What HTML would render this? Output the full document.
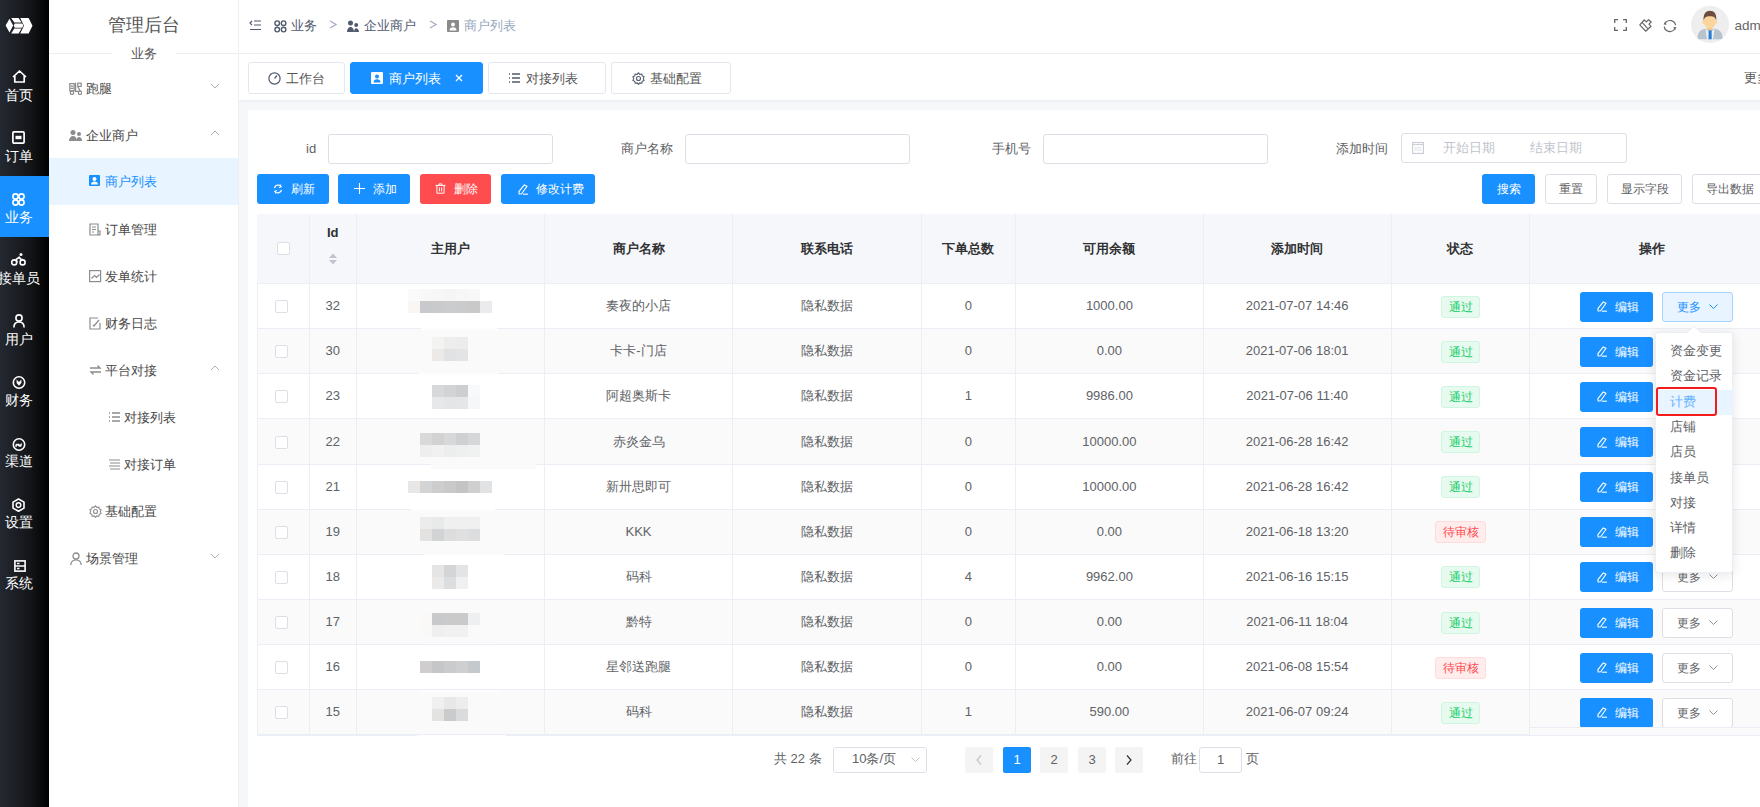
<!DOCTYPE html><html><head><meta charset="utf-8"><style>
*{box-sizing:border-box;margin:0;padding:0}
html,body{width:1760px;height:807px;overflow:hidden;background:#fff;font-family:"Liberation Sans",sans-serif;color:#606266}
.a{position:absolute}
.nav1{left:0;top:0;width:49px;height:807px;background:linear-gradient(to right,#242831 0%,#1c1f25 30%,#131518 62%,#000 100%)}
.n1{position:absolute;left:0;width:49px;height:61px;color:#fff;text-align:center}
.n1 svg{position:absolute;left:12px;top:16px}
.n1 span{position:absolute;left:-6px;width:49px;top:32.5px;font-size:14px;line-height:18px;white-space:nowrap;text-align:center}
.n1.on{background:#1890ff}
.nav2{left:49px;top:0;width:190px;height:807px;background:#fff}
.m2{position:absolute;left:49px;width:189px;height:47px;font-size:13px;color:#484848;white-space:nowrap}
.m2 .ic{position:absolute;top:17px}
.m2 .tx{position:absolute;top:14px;line-height:19px}
.m2.on{background:#e8f4ff;color:#1890ff}
.chev{position:absolute;left:160px;top:20px}
.hdr{left:239px;top:0;width:1521px;height:54px;border-bottom:1px solid #f0f0f0;background:#fff}
.bc{position:absolute;top:17px;font-size:13px;line-height:17px;white-space:nowrap;color:#515a6e}
.tabs{left:239px;top:54px;width:1521px;height:46px;background:#fff}
.tab{position:absolute;top:62px;height:32px;border:1px solid #e4e7ed;border-radius:3px;background:#fff;font-size:13px;color:#515a6e;white-space:nowrap}
.tab.on{background:#1890ff;border-color:#1890ff;color:#fff}
.main{left:239px;top:100px;width:1521px;height:707px;background:linear-gradient(#eceef2,#f5f7f9 3px,#f5f7f9)}
.card{left:248px;top:110px;width:1512px;height:697px;background:#fff}
.lbl{position:absolute;top:140px;font-size:13px;line-height:17px;color:#606266;white-space:nowrap}
.inp{position:absolute;top:134px;height:30px;border:1px solid #dcdfe6;border-radius:3px;background:#fff}
.btn{position:absolute;top:174px;height:30px;border-radius:3px;font-size:12px;line-height:30px;color:#fff;white-space:nowrap;background:#1890ff}
.btn.w{background:#fff;border:1px solid #dcdfe6;color:#606266;line-height:28px}
.tbl{left:257px;top:214px;width:1520px;height:522px;border:1px solid #ebeef5;border-right:none}
.th{position:absolute;top:214px;height:70px;background:#f5f7fa;border-bottom:1px solid #ebeef5;border-right:1px solid #ebeef5;font-size:13px;font-weight:bold;color:#303133;text-align:center;line-height:70px;white-space:nowrap}
.row{position:absolute;left:258px;width:1502px;height:45px;border-bottom:1px solid #ebeef5}
.td{position:absolute;top:0;height:100%;border-right:1px solid #ebeef5;text-align:center;font-size:13px;color:#606266;line-height:44px;white-space:nowrap}
.cb{position:absolute;width:13px;height:13px;border:1px solid #dcdfe6;border-radius:2px;background:#fff}
.tag{position:absolute;height:22px;border:1px solid #d0f5e0;background:#e7faf0;color:#13ce66;border-radius:3px;font-size:12px;line-height:20px;text-align:center}
.tag.r{border-color:#ffdbdb;background:#ffeded;color:#ff4949}
.eb{position:absolute;width:73px;height:30px;border-radius:3px;background:#1890ff;color:#fff;font-size:12px;line-height:30px;white-space:nowrap}
.mb{position:absolute;width:71px;height:30px;border-radius:3px;background:#fff;border:1px solid #dcdfe6;color:#606266;font-size:12px;line-height:28px;white-space:nowrap}
.pg{position:absolute;top:747px;height:26px;width:28px;background:#f4f4f5;border-radius:2px;font-size:13px;line-height:26px;text-align:center;color:#606266}
.dd{left:1655px;top:332px;width:78px;height:241px;background:#fff;border:1px solid #ebeef5;border-radius:3px;box-shadow:0 2px 12px rgba(0,0,0,.1)}
.di{position:absolute;left:1656px;width:77px;height:25px;font-size:12.5px;line-height:25px;color:#606266;padding-left:14px;white-space:nowrap}
</style></head><body>
<div class="a nav1"></div>
<svg class="a" style="left:0;top:10px" width="40" height="30" viewBox="0 0 40 30"><g fill="#fff"><path d="M5.6 15.6L9.5 8.8 13.2 15.6 9.5 22.4Z"/><path d="M11.2 8L18.6 8 21.6 12.6 14.3 12.6Z"/><path d="M14.6 13.5L22.2 13.5 23.4 15.6 22.2 17.7 14.6 17.7 13.8 15.6Z"/><path d="M14.3 18.6L21.6 18.6 18.6 23.6 11.2 23.6Z"/><path d="M20.2 8L28.6 8 32.5 15.8 28.6 23.6 20.2 23.6 24 15.8Z"/></g></svg>
<div class="n1" style="top:53.5px"><span>首页</span></div>
<svg class="a" style="left:11.5px;top:69.7px" width="15" height="13" viewBox="0 0 15 13"><path d="M1 7L7.5 1 14 7M2.8 5.6V12h9.4V5.6" fill="none" stroke="#fff" stroke-width="1.7" stroke-linejoin="round"/></svg>
<div class="n1" style="top:114.55px"><span>订单</span></div>
<svg class="a" style="left:12.3px;top:130.7px" width="13" height="13" viewBox="0 0 13 13"><rect x="0.9" y="0.9" width="11.2" height="11.2" rx="1" fill="none" stroke="#fff" stroke-width="1.7"/><rect x="3.5" y="4.8" width="6" height="3.4" fill="#fff"/></svg>
<div class="n1 on" style="top:175.6px"><span>业务</span></div>
<svg class="a" style="left:12.3px;top:192.7px" width="13" height="13" viewBox="0 0 13 13"><g fill="none" stroke="#fff" stroke-width="1.6"><circle cx="3.5" cy="3.5" r="2.6"/><circle cx="9.5" cy="3.5" r="2.6"/><circle cx="3.5" cy="9.5" r="2.6"/><circle cx="9.5" cy="9.5" r="2.6"/></g></svg>
<div class="n1" style="top:236.64999999999998px"><span>接单员</span></div>
<svg class="a" style="left:11.2px;top:252.7px" width="15" height="13" viewBox="0 0 15 13"><g fill="none" stroke="#fff" stroke-width="1.6"><circle cx="3.2" cy="9.4" r="2.5"/><circle cx="11.6" cy="9.4" r="2.5"/></g><circle cx="10" cy="1.6" r="1.5" fill="#fff"/><path d="M6 9.5L5.2 6.5 8.2 4.2 10 6.6H12" fill="none" stroke="#fff" stroke-width="1.6" stroke-linejoin="round"/></svg>
<div class="n1" style="top:297.7px"><span>用户</span></div>
<svg class="a" style="left:12.6px;top:313.7px" width="12" height="14" viewBox="0 0 12 14"><g fill="none" stroke="#fff" stroke-width="1.6"><circle cx="6" cy="4" r="3.1"/><path d="M0.9 13.5C0.9 9.8 3.2 8 6 8s5.1 1.8 5.1 5.5"/></g></svg>
<div class="n1" style="top:358.75px"><span>财务</span></div>
<svg class="a" style="left:11.8px;top:376.2px" width="14" height="13" viewBox="0 0 14 13"><circle cx="7" cy="6.5" r="5.7" fill="none" stroke="#fff" stroke-width="1.6"/><path d="M4.6 3.6L7 6 9.4 3.6 9.4 7 7 9.8 4.6 7Z" fill="#fff"/></svg>
<div class="n1" style="top:419.79999999999995px"><span>渠道</span></div>
<svg class="a" style="left:11.8px;top:437.7px" width="14" height="13" viewBox="0 0 14 13"><circle cx="7" cy="6.5" r="5.7" fill="none" stroke="#fff" stroke-width="1.6"/><path d="M4.5 8.8c-1.2-1.2 0-3 1.2-2.2l1.6 1.2c1.2.8 2.6-1 1.4-2.2M6 6.2l2 1.6" fill="none" stroke="#fff" stroke-width="1.5"/></svg>
<div class="n1" style="top:480.84999999999997px"><span>设置</span></div>
<svg class="a" style="left:11.8px;top:497.7px" width="13" height="14" viewBox="0 0 13 14"><path d="M6.5 1L12 4.1V10.1L6.5 13.2 1 10.1V4.1Z" fill="none" stroke="#fff" stroke-width="1.6" stroke-linejoin="round"/><circle cx="6.5" cy="7.1" r="2.3" fill="none" stroke="#fff" stroke-width="1.5"/></svg>
<div class="n1" style="top:541.9px"><span>系统</span></div>
<svg class="a" style="left:13.5px;top:560.2px" width="12" height="12" viewBox="0 0 12 12"><rect x="0.9" y="0.9" width="10.2" height="10.2" fill="none" stroke="#fff" stroke-width="1.6"/><path d="M0.9 6h10.2M3 3.4h2.5M3 8.6h2.5" stroke="#fff" stroke-width="1.5"/></svg>
<div class="a nav2"></div>
<div class="a" style="left:49px;top:14px;width:190px;text-align:center;font-size:18px;line-height:22px;color:#555">管理后台</div>
<div class="a" style="left:49px;top:53px;width:63px;height:1px;background:#eee"></div>
<div class="a" style="left:176px;top:53px;width:63px;height:1px;background:#eee"></div>
<div class="a" style="left:112px;top:45px;width:64px;text-align:center;font-size:13px;line-height:17px;color:#555">业务</div>
<div class="m2" style="top:64.5px"><svg class="ic" style="left:20px;top:17px" width="13" height="13" viewBox="0 0 13 13"><g fill="none" stroke="#8c8c8c" stroke-width="1.2"><rect x="0.8" y="1.6" width="4.4" height="7.2"/><path d="M1.5 4.2h3M1.5 6.4h3"/><path d="M6.6 0.8V9.4H10.5M8.6 4.4L11.4 9.2"/><rect x="8.8" y="1.2" width="3.4" height="3.2"/><circle cx="3" cy="10.8" r="1.7"/><circle cx="11" cy="10.8" r="1.7"/></g></svg><span class="tx" style="left:37px">跑腿</span><svg class="chev" style="left:160.5px;top:18.5px" width="10" height="6" viewBox="0 0 10 6"><path d="M1 1l4 4 4-4" fill="none" stroke="#b0b0b0" stroke-width="1"/></svg></div>
<div class="m2" style="top:111.5px"><svg class="ic" style="left:20px;top:17px" width="13" height="13" viewBox="0 0 13 13"><circle cx="4" cy="3.5" r="2.5" fill="#8c8c8c"/><path d="M0 12c0-3 1.8-5 4-5s4 2 4 5z" fill="#8c8c8c"/><circle cx="10" cy="5" r="2" fill="#8c8c8c"/><path d="M7.5 12c0-2.5 1-4 2.5-4s3 1.5 3 4z" fill="#8c8c8c"/></svg><span class="tx" style="left:37px">企业商户</span><svg class="chev" style="left:160.5px;top:18.5px" width="10" height="6" viewBox="0 0 10 6"><path d="M1 5l4-4 4 4" fill="none" stroke="#b0b0b0" stroke-width="1"/></svg></div>
<div class="m2 on" style="top:157.5px"><svg class="ic" style="left:40px;top:17px" width="13" height="13" viewBox="0 0 13 13"><rect x="0" y="0" width="11" height="11" rx="1" fill="#1890ff"/><circle cx="5.5" cy="4" r="2" fill="#fff"/><path d="M2 9.5c0-2 1.5-3 3.5-3s3.5 1 3.5 3z" fill="#fff"/></svg><span class="tx" style="left:56px">商户列表</span></div>
<div class="m2" style="top:205.5px"><svg class="ic" style="left:40px;top:17px" width="13" height="13" viewBox="0 0 13 13"><path d="M1 1h8v11H1z M3 4h4M3 6.5h4M3 9h2" fill="none" stroke="#8c8c8c" stroke-width="1.2"/><path d="M9 8h2v4H9" fill="none" stroke="#8c8c8c" stroke-width="1.2"/></svg><span class="tx" style="left:56px">订单管理</span></div>
<div class="m2" style="top:252.5px"><svg class="ic" style="left:40px;top:17px" width="13" height="13" viewBox="0 0 13 13"><rect x="0.6" y="0.6" width="11" height="11" fill="none" stroke="#8c8c8c" stroke-width="1.2"/><path d="M2.5 8.5l3-3 2 2 3-3" fill="none" stroke="#8c8c8c" stroke-width="1.2"/></svg><span class="tx" style="left:56px">发单统计</span></div>
<div class="m2" style="top:299.5px"><svg class="ic" style="left:40px;top:17px" width="13" height="13" viewBox="0 0 13 13"><path d="M9 1H1v11h10V6" fill="none" stroke="#8c8c8c" stroke-width="1.2"/><path d="M4 8l1 1 5-6" fill="none" stroke="#8c8c8c" stroke-width="1.2"/></svg><span class="tx" style="left:56px">财务日志</span></div>
<div class="m2" style="top:346.5px"><svg class="ic" style="left:40px;top:17px" width="13" height="13" viewBox="0 0 13 13"><path d="M1 4h10L8.5 1.5M12 8H2l2.5 2.5" fill="none" stroke="#8c8c8c" stroke-width="1.3"/></svg><span class="tx" style="left:56px">平台对接</span><svg class="chev" style="left:160.5px;top:18.5px" width="10" height="6" viewBox="0 0 10 6"><path d="M1 5l4-4 4 4" fill="none" stroke="#b0b0b0" stroke-width="1"/></svg></div>
<div class="m2" style="top:393.5px"><svg class="ic" style="left:59px;top:17px" width="13" height="13" viewBox="0 0 13 13"><path d="M1 2h1M1 6h1M1 10h1M4 2h8M4 6h8M4 10h8" stroke="#8c8c8c" stroke-width="1.3"/></svg><span class="tx" style="left:75px">对接列表</span></div>
<div class="m2" style="top:440.5px"><svg class="ic" style="left:59px;top:17px" width="13" height="13" viewBox="0 0 13 13"><path d="M1 2h11M2 5h10M1 8h11M2 11h10" stroke="#8c8c8c" stroke-width="1.2"/></svg><span class="tx" style="left:75px">对接订单</span></div>
<div class="m2" style="top:487.5px"><svg class="ic" style="left:40px;top:17px" width="13" height="13" viewBox="0 0 13 13"><path d="M6.5 0.8l1.3 1.5 2-.3.5 1.9 1.8.9-.8 1.8.8 1.8-1.8.9-.5 1.9-2-.3-1.3 1.5-1.3-1.5-2 .3-.5-1.9-1.8-.9.8-1.8-.8-1.8 1.8-.9.5-1.9 2 .3z" fill="none" stroke="#8c8c8c" stroke-width="1.1"/><circle cx="6.5" cy="6.5" r="2" fill="none" stroke="#8c8c8c" stroke-width="1.1"/></svg><span class="tx" style="left:56px">基础配置</span></div>
<div class="m2" style="top:534.5px"><svg class="ic" style="left:21px;top:17px" width="13" height="13" viewBox="0 0 13 13"><circle cx="6" cy="4" r="3" fill="none" stroke="#8c8c8c" stroke-width="1.3"/><path d="M0.8 13c0-3 2.3-5.2 5.2-5.2s5.2 2.2 5.2 5.2" fill="none" stroke="#8c8c8c" stroke-width="1.3"/></svg><span class="tx" style="left:37px">场景管理</span><svg class="chev" style="left:160.5px;top:18.5px" width="10" height="6" viewBox="0 0 10 6"><path d="M1 1l4 4 4-4" fill="none" stroke="#b0b0b0" stroke-width="1"/></svg></div>
<div class="a" style="left:238px;top:0;width:1px;height:807px;background:#f0f0f0"></div>
<div class="a hdr"></div>
<svg class="a" style="left:249px;top:20px" width="12" height="11" viewBox="0 0 12 11"><path d="M3 1L1 3l2 2M5 1h7M5 5h7M1 9.5h11" fill="none" stroke="#515a6e" stroke-width="1.2"/></svg>
<svg class="a" style="left:273.5px;top:20px" width="13" height="13" viewBox="0 0 13 13"><g fill="none" stroke="#515a6e" stroke-width="1.4"><circle cx="3.2" cy="3.2" r="2.3"/><circle cx="9.6" cy="3.2" r="2.3"/><circle cx="3.2" cy="9.6" r="2.3"/><circle cx="9.6" cy="9.6" r="2.3"/></g></svg>
<div class="bc" style="left:291px">业务</div>
<svg class="a" style="left:328.5px;top:20.3px" width="8" height="9" viewBox="0 0 8 9"><path d="M1 1l6 3.5L1 8" fill="none" stroke="#a6b2c2" stroke-width="1.4"/></svg>
<svg class="a" style="left:347px;top:20px" width="12" height="12" viewBox="0 0 12 12"><circle cx="3.5" cy="3" r="2.5" fill="#515a6e"/><path d="M0 12c0-3 1.5-5 3.5-5S7 9 7 12z" fill="#515a6e"/><circle cx="9.2" cy="5" r="2" fill="#515a6e"/><path d="M7 12c0-2.5 1-3.8 2.2-3.8S12 9.5 12 12z" fill="#515a6e"/></svg>
<div class="bc" style="left:364px">企业商户</div>
<svg class="a" style="left:428.5px;top:20.3px" width="8" height="9" viewBox="0 0 8 9"><path d="M1 1l6 3.5L1 8" fill="none" stroke="#a6b2c2" stroke-width="1.4"/></svg>
<svg class="a" style="left:447px;top:20px" width="12" height="12" viewBox="0 0 12 12"><rect width="12" height="12" rx="1" fill="#8a8a8a"/><circle cx="6" cy="4.5" r="2" fill="#fff"/><path d="M2.5 10.5c0-2 1.5-3.2 3.5-3.2s3.5 1.2 3.5 3.2z" fill="#fff"/></svg>
<div class="bc" style="left:464px;color:#97a8be">商户列表</div>
<svg class="a" style="left:1614px;top:19px" width="13" height="12" viewBox="0 0 13 12"><path d="M0.7 4V0.7H4M9 0.7h3.3V4M12.3 8v3.3H9M4 11.3H0.7V8" fill="none" stroke="#666" stroke-width="1.3"/></svg>
<svg class="a" style="left:1638.5px;top:19px" width="13" height="13" viewBox="0 0 13 13"><path d="M0.8 5.9L5.2 1 7.3 2.9 9.5 0.8 12.2 3 10 5.2 12 7.3 6.6 12.2Z" fill="none" stroke="#666" stroke-width="1.2" stroke-linejoin="round"/><path d="M3.2 3.6L8.8 9.6" stroke="#666" stroke-width="1.1"/></svg>
<svg class="a" style="left:1663px;top:18.5px" width="14" height="14" viewBox="0 0 14 14"><path d="M2.3 3.8A5.8 5.8 0 0 1 12.6 6.2M11.7 10A5.8 5.8 0 0 1 1.2 7.6" fill="none" stroke="#666" stroke-width="1.2"/><path d="M0.6 5.6L2.2 2.3 3.6 5.8Z M13.4 8.2L11.8 11.6 10.4 8.1Z" fill="#666"/></svg>
<div class="a" style="left:1691.3px;top:5.8px;width:37.5px;height:37.5px;border-radius:50%;background:#eeeeee;overflow:hidden"><svg width="38" height="38" viewBox="0 0 38 38"><path d="M6.5 33.2C6.5 26 9 24 14 22.8L24 22.8C29 24 31.6 26 31.6 33.2Z" fill="#b8c4cd"/><path d="M14.5 22.8L19 26.5 23.5 22.8 22 33.2 16 33.2Z" fill="#eef1f4"/><rect x="16.5" y="18" width="4.6" height="6" fill="#f3c58c"/><path d="M17.6 24.5h3L20.7 33.2h-3.2Z" fill="#2a7bd6"/><ellipse cx="12.6" cy="16.5" rx="1.2" ry="1.6" fill="#fcd59c"/><ellipse cx="25" cy="16.5" rx="1.2" ry="1.6" fill="#fcd59c"/><ellipse cx="18.8" cy="15.5" rx="6" ry="7" fill="#fcd59c"/><path d="M12.6 15C12 7.5 15 4.8 19 4.8S26 7.5 25.2 15C24.6 11.5 23 10.2 19 10.2S13.3 11.5 12.6 15Z" fill="#6f4d3e"/></svg></div>
<div class="a" style="left:1734.5px;top:16.5px;font-size:13.5px;line-height:18px;color:#666">admin</div>
<div class="a tabs"></div>
<div class="tab" style="left:248px;width:97px"></div><svg class="a" style="left:268px;top:72px" width="13" height="13" viewBox="0 0 13 13"><circle cx="6.5" cy="6.5" r="5.6" fill="none" stroke="#515a6e" stroke-width="1.2"/><path d="M6.5 6.5l2.5-3" stroke="#515a6e" stroke-width="1.2"/></svg><div class="a" style="left:286px;top:70px;font-size:13px;line-height:17px;color:#555;white-space:nowrap">工作台</div>
<div class="tab on" style="left:350px;width:133px"></div><svg class="a" style="left:371px;top:72px" width="13" height="13" viewBox="0 0 13 13"><rect width="12" height="12" rx="1" fill="#fff"/><circle cx="6" cy="4.5" r="2" fill="#1890ff"/><path d="M2.5 10.5c0-2 1.5-3.2 3.5-3.2s3.5 1.2 3.5 3.2z" fill="#1890ff"/></svg><div class="a" style="left:389px;top:70px;font-size:13px;line-height:17px;color:#fff;white-space:nowrap">商户列表</div><svg class="a" style="left:455px;top:74px" width="8" height="8" viewBox="0 0 8 8"><path d="M1 1l6 6M7 1L1 7" stroke="#fff" stroke-width="1.3"/></svg>
<div class="tab" style="left:488px;width:118px"></div><svg class="a" style="left:508px;top:72px" width="13" height="13" viewBox="0 0 13 13"><path d="M1 2h1M1 6h1M1 10h1M4 2h8M4 6h8M4 10h8" stroke="#515a6e" stroke-width="1.3"/></svg><div class="a" style="left:526px;top:70px;font-size:13px;line-height:17px;color:#555;white-space:nowrap">对接列表</div>
<div class="tab" style="left:611px;width:120px"></div><svg class="a" style="left:632px;top:72px" width="13" height="13" viewBox="0 0 13 13"><path d="M6.5 0.8l1.3 1.5 2-.3.5 1.9 1.8.9-.8 1.8.8 1.8-1.8.9-.5 1.9-2-.3-1.3 1.5-1.3-1.5-2 .3-.5-1.9-1.8-.9.8-1.8-.8-1.8 1.8-.9.5-1.9 2 .3z" fill="none" stroke="#515a6e" stroke-width="1.1"/><circle cx="6.5" cy="6.5" r="2" fill="none" stroke="#515a6e" stroke-width="1.1"/></svg><div class="a" style="left:650px;top:70px;font-size:13px;line-height:17px;color:#555;white-space:nowrap">基础配置</div>
<div class="a" style="left:1744px;top:69px;font-size:13px;line-height:17px;color:#555;white-space:nowrap">更多</div>
<div class="a main"></div>
<div class="a card"></div>
<div class="lbl" style="left:306px">id</div><div class="inp" style="left:328px;width:225px"></div>
<div class="lbl" style="left:621px">商户名称</div><div class="inp" style="left:685px;width:225px"></div>
<div class="lbl" style="left:992px">手机号</div><div class="inp" style="left:1043px;width:225px"></div>
<div class="lbl" style="left:1336px">添加时间</div><div class="inp" style="left:1401px;top:133px;width:226px"></div>
<svg class="a" style="left:1411.5px;top:142px" width="12" height="12" viewBox="0 0 12 12"><rect x="0.6" y="0.6" width="10.8" height="10.8" fill="none" stroke="#c8ccd4" stroke-width="1.1"/><path d="M0.6 2.6h10.8" stroke="#c8ccd4" stroke-width="1"/><path d="M2.6 5.8h6.8M2.6 8h6.8" stroke="#c8ccd4" stroke-width="0.9" stroke-dasharray="1.2 0.6"/></svg>
<div class="a" style="left:1442.5px;top:139.5px;font-size:12.5px;line-height:17px;color:#c0c4cc">开始日期</div>
<div class="a" style="left:1530px;top:139.5px;font-size:12.5px;line-height:17px;color:#c0c4cc">结束日期</div>
<div class="btn" style="left:257px;width:72px"><svg class="a" style="left:16px;top:10px" width="10" height="10" viewBox="0 0 10 10"><path d="M1.5 4A3.7 3.7 0 0 1 8 2.5M8.5 6A3.7 3.7 0 0 1 2 7.5" fill="none" stroke="#fff" stroke-width="1.2"/><path d="M7 .5l1.2 2.2-2.2.8M3 9.5L1.8 7.3 4 6.5" fill="none" stroke="#fff" stroke-width="1.1"/></svg><span class="a" style="left:34px">刷新</span></div>
<div class="btn" style="left:338px;width:72px"><svg class="a" style="left:16px;top:9px" width="11" height="11" viewBox="0 0 11 11"><path d="M5.5 0v11M0 5.5h11" stroke="#fff" stroke-width="1.1"/></svg><span class="a" style="left:35px">添加</span></div>
<div class="btn" style="left:420px;width:71px;background:#ff4d4f"><svg class="a" style="left:15px;top:9px" width="11" height="11" viewBox="0 0 11 11"><path d="M0.5 2.4h10M4 2.4V0.9h3v1.5M1.9 2.4V10.2h7.2V2.4M4.4 4.4v4M6.6 4.4v4" fill="none" stroke="#fff" stroke-width="0.95"/></svg><span class="a" style="left:34px">删除</span></div>
<div class="btn" style="left:501px;width:94px"><svg class="a" style="left:16.5px;top:9.5px" width="11" height="11" viewBox="0 0 11 11"><path d="M6.3 0.9L9 2.3 3.7 9.7 1.1 10 0.9 7.6Z" fill="none" stroke="#fff" stroke-width="1.1" stroke-linejoin="round"/><path d="M4.8 10.2H10" stroke="#fff" stroke-width="1.1"/></svg><span class="a" style="left:35px">修改计费</span></div>
<div class="btn" style="left:1482px;width:53px;text-align:center">搜索</div>
<div class="btn w" style="left:1545px;width:52px;text-align:center">重置</div>
<div class="btn w" style="left:1607px;width:75px;text-align:center">显示字段</div>
<div class="btn w" style="left:1692px;width:75px;text-align:center">导出数据</div>
<div class="a" style="left:257px;top:214px;width:1503px;height:522px;border-left:1px solid #ebeef5;border-top:1px solid #ebeef5;border-bottom:1px solid #ebeef5"></div>
<div class="th" style="left:257px;width:52.5px;border-right:none"></div>
<div class="th" style="left:309.5px;width:46.5px;border-right:none"></div>
<div class="th" style="left:356px;width:188.5px;border-right:none">主用户</div>
<div class="th" style="left:544.5px;width:188.0px;border-right:none">商户名称</div>
<div class="th" style="left:732.5px;width:188.5px;border-right:none">联系电话</div>
<div class="th" style="left:921px;width:94.5px;border-right:none">下单总数</div>
<div class="th" style="left:1015.5px;width:187.79999999999995px;border-right:none">可用余额</div>
<div class="th" style="left:1203.3px;width:187.70000000000005px;border-right:none">添加时间</div>
<div class="th" style="left:1391px;width:138px;border-right:none">状态</div>
<div class="th" style="left:1529px;width:246px;border-right:none">操作</div>
<div class="a" style="left:309px;top:214px;width:1px;height:70px;background:#ebeef5"></div>
<div class="a" style="left:356px;top:214px;width:1px;height:70px;background:#ebeef5"></div>
<div class="a" style="left:544px;top:214px;width:1px;height:70px;background:#ebeef5"></div>
<div class="a" style="left:732px;top:214px;width:1px;height:70px;background:#ebeef5"></div>
<div class="a" style="left:921px;top:214px;width:1px;height:70px;background:#ebeef5"></div>
<div class="a" style="left:1015px;top:214px;width:1px;height:70px;background:#ebeef5"></div>
<div class="a" style="left:1203px;top:214px;width:1px;height:70px;background:#ebeef5"></div>
<div class="a" style="left:1391px;top:214px;width:1px;height:70px;background:#ebeef5"></div>
<div class="a" style="left:1529px;top:214px;width:1px;height:70px;background:#ebeef5"></div>
<div class="cb" style="left:277px;top:242px"></div>
<div class="a" style="left:327px;top:225px;font-size:13px;font-weight:bold;color:#303133;line-height:15px">Id</div>
<svg class="a" style="left:328px;top:253px" width="10" height="12" viewBox="0 0 10 12"><path d="M5 0.5L9 5H1z M5 11.5L9 7H1z" fill="#c0c4cc"/></svg>
<div class="a" style="left:258px;top:284.00px;width:1502px;height:45.15px;background:#fff;border-bottom:1px solid #ebeef5"></div>
<div class="a" style="left:309px;top:284.00px;width:1px;height:45.15px;background:#ebeef5"></div>
<div class="a" style="left:356px;top:284.00px;width:1px;height:45.15px;background:#ebeef5"></div>
<div class="a" style="left:544px;top:284.00px;width:1px;height:45.15px;background:#ebeef5"></div>
<div class="a" style="left:732px;top:284.00px;width:1px;height:45.15px;background:#ebeef5"></div>
<div class="a" style="left:921px;top:284.00px;width:1px;height:45.15px;background:#ebeef5"></div>
<div class="a" style="left:1015px;top:284.00px;width:1px;height:45.15px;background:#ebeef5"></div>
<div class="a" style="left:1203px;top:284.00px;width:1px;height:45.15px;background:#ebeef5"></div>
<div class="a" style="left:1391px;top:284.00px;width:1px;height:45.15px;background:#ebeef5"></div>
<div class="a" style="left:1529px;top:284.00px;width:1px;height:45.15px;background:#ebeef5"></div>
<div class="cb" style="left:275px;top:300.07px"></div>
<div class="a" style="left:309.5px;top:297.07px;width:46.5px;text-align:center;font-size:13px;line-height:18px;color:#606266;white-space:nowrap">32</div>
<div class="a" style="left:544.5px;top:297.07px;width:188.0px;text-align:center;font-size:13px;line-height:18px;color:#606266;white-space:nowrap">奏夜的小店</div>
<div class="a" style="left:732.5px;top:297.07px;width:188.5px;text-align:center;font-size:13px;line-height:18px;color:#606266;white-space:nowrap">隐私数据</div>
<div class="a" style="left:921px;top:297.07px;width:94.5px;text-align:center;font-size:13px;line-height:18px;color:#606266;white-space:nowrap">0</div>
<div class="a" style="left:1015.5px;top:297.07px;width:187.79999999999995px;text-align:center;font-size:13px;line-height:18px;color:#606266;white-space:nowrap">1000.00</div>
<div class="a" style="left:1203.3px;top:297.07px;width:187.70000000000005px;text-align:center;font-size:13px;line-height:18px;color:#606266;white-space:nowrap">2021-07-07 14:46</div>
<div class="tag" style="left:1441px;top:295.57px;width:39px">通过</div>
<div class="eb" style="left:1580px;top:291.57px"><svg class="a" style="left:16.5px;top:9.5px" width="11" height="11" viewBox="0 0 11 11"><path d="M6.3 0.9L9 2.3 3.7 9.7 1.1 10 0.9 7.6Z" fill="none" stroke="#fff" stroke-width="1.1" stroke-linejoin="round"/><path d="M4.8 10.2H10" stroke="#fff" stroke-width="1.1"/></svg><span class="a" style="left:35px">编辑</span></div>
<div class="mb" style="left:1662px;top:291.57px;background:#e8f4ff;border-color:#a3d3ff;color:#1890ff"><span class="a" style="left:14px">更多</span><svg class="a" style="left:46px;top:11px" width="9" height="6" viewBox="0 0 9 6"><path d="M.5 .5l4 4 4-4" fill="none" stroke="#1890ff" stroke-width="1"/></svg></div>
<div class="a" style="left:258px;top:329.15px;width:1502px;height:45.15px;background:#fafafa;border-bottom:1px solid #ebeef5"></div>
<div class="a" style="left:309px;top:329.15px;width:1px;height:45.15px;background:#ebeef5"></div>
<div class="a" style="left:356px;top:329.15px;width:1px;height:45.15px;background:#ebeef5"></div>
<div class="a" style="left:544px;top:329.15px;width:1px;height:45.15px;background:#ebeef5"></div>
<div class="a" style="left:732px;top:329.15px;width:1px;height:45.15px;background:#ebeef5"></div>
<div class="a" style="left:921px;top:329.15px;width:1px;height:45.15px;background:#ebeef5"></div>
<div class="a" style="left:1015px;top:329.15px;width:1px;height:45.15px;background:#ebeef5"></div>
<div class="a" style="left:1203px;top:329.15px;width:1px;height:45.15px;background:#ebeef5"></div>
<div class="a" style="left:1391px;top:329.15px;width:1px;height:45.15px;background:#ebeef5"></div>
<div class="a" style="left:1529px;top:329.15px;width:1px;height:45.15px;background:#ebeef5"></div>
<div class="cb" style="left:275px;top:345.22px"></div>
<div class="a" style="left:309.5px;top:342.22px;width:46.5px;text-align:center;font-size:13px;line-height:18px;color:#606266;white-space:nowrap">30</div>
<div class="a" style="left:544.5px;top:342.22px;width:188.0px;text-align:center;font-size:13px;line-height:18px;color:#606266;white-space:nowrap">卡卡-门店</div>
<div class="a" style="left:732.5px;top:342.22px;width:188.5px;text-align:center;font-size:13px;line-height:18px;color:#606266;white-space:nowrap">隐私数据</div>
<div class="a" style="left:921px;top:342.22px;width:94.5px;text-align:center;font-size:13px;line-height:18px;color:#606266;white-space:nowrap">0</div>
<div class="a" style="left:1015.5px;top:342.22px;width:187.79999999999995px;text-align:center;font-size:13px;line-height:18px;color:#606266;white-space:nowrap">0.00</div>
<div class="a" style="left:1203.3px;top:342.22px;width:187.70000000000005px;text-align:center;font-size:13px;line-height:18px;color:#606266;white-space:nowrap">2021-07-06 18:01</div>
<div class="tag" style="left:1441px;top:340.72px;width:39px">通过</div>
<div class="eb" style="left:1580px;top:336.72px"><svg class="a" style="left:16.5px;top:9.5px" width="11" height="11" viewBox="0 0 11 11"><path d="M6.3 0.9L9 2.3 3.7 9.7 1.1 10 0.9 7.6Z" fill="none" stroke="#fff" stroke-width="1.1" stroke-linejoin="round"/><path d="M4.8 10.2H10" stroke="#fff" stroke-width="1.1"/></svg><span class="a" style="left:35px">编辑</span></div>
<div class="mb" style="left:1662px;top:336.72px"><span class="a" style="left:14px">更多</span><svg class="a" style="left:46px;top:11px" width="9" height="6" viewBox="0 0 9 6"><path d="M.5 .5l4 4 4-4" fill="none" stroke="#909399" stroke-width="1"/></svg></div>
<div class="a" style="left:258px;top:374.30px;width:1502px;height:45.15px;background:#fff;border-bottom:1px solid #ebeef5"></div>
<div class="a" style="left:309px;top:374.30px;width:1px;height:45.15px;background:#ebeef5"></div>
<div class="a" style="left:356px;top:374.30px;width:1px;height:45.15px;background:#ebeef5"></div>
<div class="a" style="left:544px;top:374.30px;width:1px;height:45.15px;background:#ebeef5"></div>
<div class="a" style="left:732px;top:374.30px;width:1px;height:45.15px;background:#ebeef5"></div>
<div class="a" style="left:921px;top:374.30px;width:1px;height:45.15px;background:#ebeef5"></div>
<div class="a" style="left:1015px;top:374.30px;width:1px;height:45.15px;background:#ebeef5"></div>
<div class="a" style="left:1203px;top:374.30px;width:1px;height:45.15px;background:#ebeef5"></div>
<div class="a" style="left:1391px;top:374.30px;width:1px;height:45.15px;background:#ebeef5"></div>
<div class="a" style="left:1529px;top:374.30px;width:1px;height:45.15px;background:#ebeef5"></div>
<div class="cb" style="left:275px;top:390.38px"></div>
<div class="a" style="left:309.5px;top:387.38px;width:46.5px;text-align:center;font-size:13px;line-height:18px;color:#606266;white-space:nowrap">23</div>
<div class="a" style="left:544.5px;top:387.38px;width:188.0px;text-align:center;font-size:13px;line-height:18px;color:#606266;white-space:nowrap">阿超奥斯卡</div>
<div class="a" style="left:732.5px;top:387.38px;width:188.5px;text-align:center;font-size:13px;line-height:18px;color:#606266;white-space:nowrap">隐私数据</div>
<div class="a" style="left:921px;top:387.38px;width:94.5px;text-align:center;font-size:13px;line-height:18px;color:#606266;white-space:nowrap">1</div>
<div class="a" style="left:1015.5px;top:387.38px;width:187.79999999999995px;text-align:center;font-size:13px;line-height:18px;color:#606266;white-space:nowrap">9986.00</div>
<div class="a" style="left:1203.3px;top:387.38px;width:187.70000000000005px;text-align:center;font-size:13px;line-height:18px;color:#606266;white-space:nowrap">2021-07-06 11:40</div>
<div class="tag" style="left:1441px;top:385.88px;width:39px">通过</div>
<div class="eb" style="left:1580px;top:381.88px"><svg class="a" style="left:16.5px;top:9.5px" width="11" height="11" viewBox="0 0 11 11"><path d="M6.3 0.9L9 2.3 3.7 9.7 1.1 10 0.9 7.6Z" fill="none" stroke="#fff" stroke-width="1.1" stroke-linejoin="round"/><path d="M4.8 10.2H10" stroke="#fff" stroke-width="1.1"/></svg><span class="a" style="left:35px">编辑</span></div>
<div class="mb" style="left:1662px;top:381.88px"><span class="a" style="left:14px">更多</span><svg class="a" style="left:46px;top:11px" width="9" height="6" viewBox="0 0 9 6"><path d="M.5 .5l4 4 4-4" fill="none" stroke="#909399" stroke-width="1"/></svg></div>
<div class="a" style="left:258px;top:419.45px;width:1502px;height:45.15px;background:#fafafa;border-bottom:1px solid #ebeef5"></div>
<div class="a" style="left:309px;top:419.45px;width:1px;height:45.15px;background:#ebeef5"></div>
<div class="a" style="left:356px;top:419.45px;width:1px;height:45.15px;background:#ebeef5"></div>
<div class="a" style="left:544px;top:419.45px;width:1px;height:45.15px;background:#ebeef5"></div>
<div class="a" style="left:732px;top:419.45px;width:1px;height:45.15px;background:#ebeef5"></div>
<div class="a" style="left:921px;top:419.45px;width:1px;height:45.15px;background:#ebeef5"></div>
<div class="a" style="left:1015px;top:419.45px;width:1px;height:45.15px;background:#ebeef5"></div>
<div class="a" style="left:1203px;top:419.45px;width:1px;height:45.15px;background:#ebeef5"></div>
<div class="a" style="left:1391px;top:419.45px;width:1px;height:45.15px;background:#ebeef5"></div>
<div class="a" style="left:1529px;top:419.45px;width:1px;height:45.15px;background:#ebeef5"></div>
<div class="cb" style="left:275px;top:435.52px"></div>
<div class="a" style="left:309.5px;top:432.52px;width:46.5px;text-align:center;font-size:13px;line-height:18px;color:#606266;white-space:nowrap">22</div>
<div class="a" style="left:544.5px;top:432.52px;width:188.0px;text-align:center;font-size:13px;line-height:18px;color:#606266;white-space:nowrap">赤炎金乌</div>
<div class="a" style="left:732.5px;top:432.52px;width:188.5px;text-align:center;font-size:13px;line-height:18px;color:#606266;white-space:nowrap">隐私数据</div>
<div class="a" style="left:921px;top:432.52px;width:94.5px;text-align:center;font-size:13px;line-height:18px;color:#606266;white-space:nowrap">0</div>
<div class="a" style="left:1015.5px;top:432.52px;width:187.79999999999995px;text-align:center;font-size:13px;line-height:18px;color:#606266;white-space:nowrap">10000.00</div>
<div class="a" style="left:1203.3px;top:432.52px;width:187.70000000000005px;text-align:center;font-size:13px;line-height:18px;color:#606266;white-space:nowrap">2021-06-28 16:42</div>
<div class="tag" style="left:1441px;top:431.02px;width:39px">通过</div>
<div class="eb" style="left:1580px;top:427.02px"><svg class="a" style="left:16.5px;top:9.5px" width="11" height="11" viewBox="0 0 11 11"><path d="M6.3 0.9L9 2.3 3.7 9.7 1.1 10 0.9 7.6Z" fill="none" stroke="#fff" stroke-width="1.1" stroke-linejoin="round"/><path d="M4.8 10.2H10" stroke="#fff" stroke-width="1.1"/></svg><span class="a" style="left:35px">编辑</span></div>
<div class="mb" style="left:1662px;top:427.02px"><span class="a" style="left:14px">更多</span><svg class="a" style="left:46px;top:11px" width="9" height="6" viewBox="0 0 9 6"><path d="M.5 .5l4 4 4-4" fill="none" stroke="#909399" stroke-width="1"/></svg></div>
<div class="a" style="left:258px;top:464.60px;width:1502px;height:45.15px;background:#fff;border-bottom:1px solid #ebeef5"></div>
<div class="a" style="left:309px;top:464.60px;width:1px;height:45.15px;background:#ebeef5"></div>
<div class="a" style="left:356px;top:464.60px;width:1px;height:45.15px;background:#ebeef5"></div>
<div class="a" style="left:544px;top:464.60px;width:1px;height:45.15px;background:#ebeef5"></div>
<div class="a" style="left:732px;top:464.60px;width:1px;height:45.15px;background:#ebeef5"></div>
<div class="a" style="left:921px;top:464.60px;width:1px;height:45.15px;background:#ebeef5"></div>
<div class="a" style="left:1015px;top:464.60px;width:1px;height:45.15px;background:#ebeef5"></div>
<div class="a" style="left:1203px;top:464.60px;width:1px;height:45.15px;background:#ebeef5"></div>
<div class="a" style="left:1391px;top:464.60px;width:1px;height:45.15px;background:#ebeef5"></div>
<div class="a" style="left:1529px;top:464.60px;width:1px;height:45.15px;background:#ebeef5"></div>
<div class="cb" style="left:275px;top:480.68px"></div>
<div class="a" style="left:309.5px;top:477.68px;width:46.5px;text-align:center;font-size:13px;line-height:18px;color:#606266;white-space:nowrap">21</div>
<div class="a" style="left:544.5px;top:477.68px;width:188.0px;text-align:center;font-size:13px;line-height:18px;color:#606266;white-space:nowrap">新卅思即可</div>
<div class="a" style="left:732.5px;top:477.68px;width:188.5px;text-align:center;font-size:13px;line-height:18px;color:#606266;white-space:nowrap">隐私数据</div>
<div class="a" style="left:921px;top:477.68px;width:94.5px;text-align:center;font-size:13px;line-height:18px;color:#606266;white-space:nowrap">0</div>
<div class="a" style="left:1015.5px;top:477.68px;width:187.79999999999995px;text-align:center;font-size:13px;line-height:18px;color:#606266;white-space:nowrap">10000.00</div>
<div class="a" style="left:1203.3px;top:477.68px;width:187.70000000000005px;text-align:center;font-size:13px;line-height:18px;color:#606266;white-space:nowrap">2021-06-28 16:42</div>
<div class="tag" style="left:1441px;top:476.18px;width:39px">通过</div>
<div class="eb" style="left:1580px;top:472.18px"><svg class="a" style="left:16.5px;top:9.5px" width="11" height="11" viewBox="0 0 11 11"><path d="M6.3 0.9L9 2.3 3.7 9.7 1.1 10 0.9 7.6Z" fill="none" stroke="#fff" stroke-width="1.1" stroke-linejoin="round"/><path d="M4.8 10.2H10" stroke="#fff" stroke-width="1.1"/></svg><span class="a" style="left:35px">编辑</span></div>
<div class="mb" style="left:1662px;top:472.18px"><span class="a" style="left:14px">更多</span><svg class="a" style="left:46px;top:11px" width="9" height="6" viewBox="0 0 9 6"><path d="M.5 .5l4 4 4-4" fill="none" stroke="#909399" stroke-width="1"/></svg></div>
<div class="a" style="left:258px;top:509.75px;width:1502px;height:45.15px;background:#fafafa;border-bottom:1px solid #ebeef5"></div>
<div class="a" style="left:309px;top:509.75px;width:1px;height:45.15px;background:#ebeef5"></div>
<div class="a" style="left:356px;top:509.75px;width:1px;height:45.15px;background:#ebeef5"></div>
<div class="a" style="left:544px;top:509.75px;width:1px;height:45.15px;background:#ebeef5"></div>
<div class="a" style="left:732px;top:509.75px;width:1px;height:45.15px;background:#ebeef5"></div>
<div class="a" style="left:921px;top:509.75px;width:1px;height:45.15px;background:#ebeef5"></div>
<div class="a" style="left:1015px;top:509.75px;width:1px;height:45.15px;background:#ebeef5"></div>
<div class="a" style="left:1203px;top:509.75px;width:1px;height:45.15px;background:#ebeef5"></div>
<div class="a" style="left:1391px;top:509.75px;width:1px;height:45.15px;background:#ebeef5"></div>
<div class="a" style="left:1529px;top:509.75px;width:1px;height:45.15px;background:#ebeef5"></div>
<div class="cb" style="left:275px;top:525.83px"></div>
<div class="a" style="left:309.5px;top:522.83px;width:46.5px;text-align:center;font-size:13px;line-height:18px;color:#606266;white-space:nowrap">19</div>
<div class="a" style="left:544.5px;top:522.83px;width:188.0px;text-align:center;font-size:13px;line-height:18px;color:#606266;white-space:nowrap">KKK</div>
<div class="a" style="left:732.5px;top:522.83px;width:188.5px;text-align:center;font-size:13px;line-height:18px;color:#606266;white-space:nowrap">隐私数据</div>
<div class="a" style="left:921px;top:522.83px;width:94.5px;text-align:center;font-size:13px;line-height:18px;color:#606266;white-space:nowrap">0</div>
<div class="a" style="left:1015.5px;top:522.83px;width:187.79999999999995px;text-align:center;font-size:13px;line-height:18px;color:#606266;white-space:nowrap">0.00</div>
<div class="a" style="left:1203.3px;top:522.83px;width:187.70000000000005px;text-align:center;font-size:13px;line-height:18px;color:#606266;white-space:nowrap">2021-06-18 13:20</div>
<div class="tag r" style="left:1435px;top:521.33px;width:51px">待审核</div>
<div class="eb" style="left:1580px;top:517.33px"><svg class="a" style="left:16.5px;top:9.5px" width="11" height="11" viewBox="0 0 11 11"><path d="M6.3 0.9L9 2.3 3.7 9.7 1.1 10 0.9 7.6Z" fill="none" stroke="#fff" stroke-width="1.1" stroke-linejoin="round"/><path d="M4.8 10.2H10" stroke="#fff" stroke-width="1.1"/></svg><span class="a" style="left:35px">编辑</span></div>
<div class="mb" style="left:1662px;top:517.33px"><span class="a" style="left:14px">更多</span><svg class="a" style="left:46px;top:11px" width="9" height="6" viewBox="0 0 9 6"><path d="M.5 .5l4 4 4-4" fill="none" stroke="#909399" stroke-width="1"/></svg></div>
<div class="a" style="left:258px;top:554.90px;width:1502px;height:45.15px;background:#fff;border-bottom:1px solid #ebeef5"></div>
<div class="a" style="left:309px;top:554.90px;width:1px;height:45.15px;background:#ebeef5"></div>
<div class="a" style="left:356px;top:554.90px;width:1px;height:45.15px;background:#ebeef5"></div>
<div class="a" style="left:544px;top:554.90px;width:1px;height:45.15px;background:#ebeef5"></div>
<div class="a" style="left:732px;top:554.90px;width:1px;height:45.15px;background:#ebeef5"></div>
<div class="a" style="left:921px;top:554.90px;width:1px;height:45.15px;background:#ebeef5"></div>
<div class="a" style="left:1015px;top:554.90px;width:1px;height:45.15px;background:#ebeef5"></div>
<div class="a" style="left:1203px;top:554.90px;width:1px;height:45.15px;background:#ebeef5"></div>
<div class="a" style="left:1391px;top:554.90px;width:1px;height:45.15px;background:#ebeef5"></div>
<div class="a" style="left:1529px;top:554.90px;width:1px;height:45.15px;background:#ebeef5"></div>
<div class="cb" style="left:275px;top:570.98px"></div>
<div class="a" style="left:309.5px;top:567.98px;width:46.5px;text-align:center;font-size:13px;line-height:18px;color:#606266;white-space:nowrap">18</div>
<div class="a" style="left:544.5px;top:567.98px;width:188.0px;text-align:center;font-size:13px;line-height:18px;color:#606266;white-space:nowrap">码科</div>
<div class="a" style="left:732.5px;top:567.98px;width:188.5px;text-align:center;font-size:13px;line-height:18px;color:#606266;white-space:nowrap">隐私数据</div>
<div class="a" style="left:921px;top:567.98px;width:94.5px;text-align:center;font-size:13px;line-height:18px;color:#606266;white-space:nowrap">4</div>
<div class="a" style="left:1015.5px;top:567.98px;width:187.79999999999995px;text-align:center;font-size:13px;line-height:18px;color:#606266;white-space:nowrap">9962.00</div>
<div class="a" style="left:1203.3px;top:567.98px;width:187.70000000000005px;text-align:center;font-size:13px;line-height:18px;color:#606266;white-space:nowrap">2021-06-16 15:15</div>
<div class="tag" style="left:1441px;top:566.48px;width:39px">通过</div>
<div class="eb" style="left:1580px;top:562.48px"><svg class="a" style="left:16.5px;top:9.5px" width="11" height="11" viewBox="0 0 11 11"><path d="M6.3 0.9L9 2.3 3.7 9.7 1.1 10 0.9 7.6Z" fill="none" stroke="#fff" stroke-width="1.1" stroke-linejoin="round"/><path d="M4.8 10.2H10" stroke="#fff" stroke-width="1.1"/></svg><span class="a" style="left:35px">编辑</span></div>
<div class="mb" style="left:1662px;top:562.48px"><span class="a" style="left:14px">更多</span><svg class="a" style="left:46px;top:11px" width="9" height="6" viewBox="0 0 9 6"><path d="M.5 .5l4 4 4-4" fill="none" stroke="#909399" stroke-width="1"/></svg></div>
<div class="a" style="left:258px;top:600.05px;width:1502px;height:45.15px;background:#fafafa;border-bottom:1px solid #ebeef5"></div>
<div class="a" style="left:309px;top:600.05px;width:1px;height:45.15px;background:#ebeef5"></div>
<div class="a" style="left:356px;top:600.05px;width:1px;height:45.15px;background:#ebeef5"></div>
<div class="a" style="left:544px;top:600.05px;width:1px;height:45.15px;background:#ebeef5"></div>
<div class="a" style="left:732px;top:600.05px;width:1px;height:45.15px;background:#ebeef5"></div>
<div class="a" style="left:921px;top:600.05px;width:1px;height:45.15px;background:#ebeef5"></div>
<div class="a" style="left:1015px;top:600.05px;width:1px;height:45.15px;background:#ebeef5"></div>
<div class="a" style="left:1203px;top:600.05px;width:1px;height:45.15px;background:#ebeef5"></div>
<div class="a" style="left:1391px;top:600.05px;width:1px;height:45.15px;background:#ebeef5"></div>
<div class="a" style="left:1529px;top:600.05px;width:1px;height:45.15px;background:#ebeef5"></div>
<div class="cb" style="left:275px;top:616.12px"></div>
<div class="a" style="left:309.5px;top:613.12px;width:46.5px;text-align:center;font-size:13px;line-height:18px;color:#606266;white-space:nowrap">17</div>
<div class="a" style="left:544.5px;top:613.12px;width:188.0px;text-align:center;font-size:13px;line-height:18px;color:#606266;white-space:nowrap">黔特</div>
<div class="a" style="left:732.5px;top:613.12px;width:188.5px;text-align:center;font-size:13px;line-height:18px;color:#606266;white-space:nowrap">隐私数据</div>
<div class="a" style="left:921px;top:613.12px;width:94.5px;text-align:center;font-size:13px;line-height:18px;color:#606266;white-space:nowrap">0</div>
<div class="a" style="left:1015.5px;top:613.12px;width:187.79999999999995px;text-align:center;font-size:13px;line-height:18px;color:#606266;white-space:nowrap">0.00</div>
<div class="a" style="left:1203.3px;top:613.12px;width:187.70000000000005px;text-align:center;font-size:13px;line-height:18px;color:#606266;white-space:nowrap">2021-06-11 18:04</div>
<div class="tag" style="left:1441px;top:611.62px;width:39px">通过</div>
<div class="eb" style="left:1580px;top:607.62px"><svg class="a" style="left:16.5px;top:9.5px" width="11" height="11" viewBox="0 0 11 11"><path d="M6.3 0.9L9 2.3 3.7 9.7 1.1 10 0.9 7.6Z" fill="none" stroke="#fff" stroke-width="1.1" stroke-linejoin="round"/><path d="M4.8 10.2H10" stroke="#fff" stroke-width="1.1"/></svg><span class="a" style="left:35px">编辑</span></div>
<div class="mb" style="left:1662px;top:607.62px"><span class="a" style="left:14px">更多</span><svg class="a" style="left:46px;top:11px" width="9" height="6" viewBox="0 0 9 6"><path d="M.5 .5l4 4 4-4" fill="none" stroke="#909399" stroke-width="1"/></svg></div>
<div class="a" style="left:258px;top:645.20px;width:1502px;height:45.15px;background:#fff;border-bottom:1px solid #ebeef5"></div>
<div class="a" style="left:309px;top:645.20px;width:1px;height:45.15px;background:#ebeef5"></div>
<div class="a" style="left:356px;top:645.20px;width:1px;height:45.15px;background:#ebeef5"></div>
<div class="a" style="left:544px;top:645.20px;width:1px;height:45.15px;background:#ebeef5"></div>
<div class="a" style="left:732px;top:645.20px;width:1px;height:45.15px;background:#ebeef5"></div>
<div class="a" style="left:921px;top:645.20px;width:1px;height:45.15px;background:#ebeef5"></div>
<div class="a" style="left:1015px;top:645.20px;width:1px;height:45.15px;background:#ebeef5"></div>
<div class="a" style="left:1203px;top:645.20px;width:1px;height:45.15px;background:#ebeef5"></div>
<div class="a" style="left:1391px;top:645.20px;width:1px;height:45.15px;background:#ebeef5"></div>
<div class="a" style="left:1529px;top:645.20px;width:1px;height:45.15px;background:#ebeef5"></div>
<div class="cb" style="left:275px;top:661.28px"></div>
<div class="a" style="left:309.5px;top:658.28px;width:46.5px;text-align:center;font-size:13px;line-height:18px;color:#606266;white-space:nowrap">16</div>
<div class="a" style="left:544.5px;top:658.28px;width:188.0px;text-align:center;font-size:13px;line-height:18px;color:#606266;white-space:nowrap">星邻送跑腿</div>
<div class="a" style="left:732.5px;top:658.28px;width:188.5px;text-align:center;font-size:13px;line-height:18px;color:#606266;white-space:nowrap">隐私数据</div>
<div class="a" style="left:921px;top:658.28px;width:94.5px;text-align:center;font-size:13px;line-height:18px;color:#606266;white-space:nowrap">0</div>
<div class="a" style="left:1015.5px;top:658.28px;width:187.79999999999995px;text-align:center;font-size:13px;line-height:18px;color:#606266;white-space:nowrap">0.00</div>
<div class="a" style="left:1203.3px;top:658.28px;width:187.70000000000005px;text-align:center;font-size:13px;line-height:18px;color:#606266;white-space:nowrap">2021-06-08 15:54</div>
<div class="tag r" style="left:1435px;top:656.78px;width:51px">待审核</div>
<div class="eb" style="left:1580px;top:652.78px"><svg class="a" style="left:16.5px;top:9.5px" width="11" height="11" viewBox="0 0 11 11"><path d="M6.3 0.9L9 2.3 3.7 9.7 1.1 10 0.9 7.6Z" fill="none" stroke="#fff" stroke-width="1.1" stroke-linejoin="round"/><path d="M4.8 10.2H10" stroke="#fff" stroke-width="1.1"/></svg><span class="a" style="left:35px">编辑</span></div>
<div class="mb" style="left:1662px;top:652.78px"><span class="a" style="left:14px">更多</span><svg class="a" style="left:46px;top:11px" width="9" height="6" viewBox="0 0 9 6"><path d="M.5 .5l4 4 4-4" fill="none" stroke="#909399" stroke-width="1"/></svg></div>
<div class="a" style="left:258px;top:690.35px;width:1502px;height:45.15px;background:#fafafa;border-bottom:1px solid #ebeef5"></div>
<div class="a" style="left:309px;top:690.35px;width:1px;height:45.15px;background:#ebeef5"></div>
<div class="a" style="left:356px;top:690.35px;width:1px;height:45.15px;background:#ebeef5"></div>
<div class="a" style="left:544px;top:690.35px;width:1px;height:45.15px;background:#ebeef5"></div>
<div class="a" style="left:732px;top:690.35px;width:1px;height:45.15px;background:#ebeef5"></div>
<div class="a" style="left:921px;top:690.35px;width:1px;height:45.15px;background:#ebeef5"></div>
<div class="a" style="left:1015px;top:690.35px;width:1px;height:45.15px;background:#ebeef5"></div>
<div class="a" style="left:1203px;top:690.35px;width:1px;height:45.15px;background:#ebeef5"></div>
<div class="a" style="left:1391px;top:690.35px;width:1px;height:45.15px;background:#ebeef5"></div>
<div class="a" style="left:1529px;top:690.35px;width:1px;height:45.15px;background:#ebeef5"></div>
<div class="cb" style="left:275px;top:706.42px"></div>
<div class="a" style="left:309.5px;top:703.42px;width:46.5px;text-align:center;font-size:13px;line-height:18px;color:#606266;white-space:nowrap">15</div>
<div class="a" style="left:544.5px;top:703.42px;width:188.0px;text-align:center;font-size:13px;line-height:18px;color:#606266;white-space:nowrap">码科</div>
<div class="a" style="left:732.5px;top:703.42px;width:188.5px;text-align:center;font-size:13px;line-height:18px;color:#606266;white-space:nowrap">隐私数据</div>
<div class="a" style="left:921px;top:703.42px;width:94.5px;text-align:center;font-size:13px;line-height:18px;color:#606266;white-space:nowrap">1</div>
<div class="a" style="left:1015.5px;top:703.42px;width:187.79999999999995px;text-align:center;font-size:13px;line-height:18px;color:#606266;white-space:nowrap">590.00</div>
<div class="a" style="left:1203.3px;top:703.42px;width:187.70000000000005px;text-align:center;font-size:13px;line-height:18px;color:#606266;white-space:nowrap">2021-06-07 09:24</div>
<div class="tag" style="left:1441px;top:701.92px;width:39px">通过</div>
<div class="eb" style="left:1580px;top:697.92px"><svg class="a" style="left:16.5px;top:9.5px" width="11" height="11" viewBox="0 0 11 11"><path d="M6.3 0.9L9 2.3 3.7 9.7 1.1 10 0.9 7.6Z" fill="none" stroke="#fff" stroke-width="1.1" stroke-linejoin="round"/><path d="M4.8 10.2H10" stroke="#fff" stroke-width="1.1"/></svg><span class="a" style="left:35px">编辑</span></div>
<div class="mb" style="left:1662px;top:697.92px"><span class="a" style="left:14px">更多</span><svg class="a" style="left:46px;top:11px" width="9" height="6" viewBox="0 0 9 6"><path d="M.5 .5l4 4 4-4" fill="none" stroke="#909399" stroke-width="1"/></svg></div>
<div class="a" style="left:421px;top:327.5px;width:76px;height:2px;background:#fdfdfd"></div>
<div class="a" style="left:418px;top:372.5px;width:80px;height:2px;background:#fdfdfd"></div>
<div class="a" style="left:431px;top:463px;width:105px;height:6px;background:#fafafa"></div>
<div class="a" style="left:411px;top:508.5px;width:84px;height:2px;background:#fdfdfd"></div>
<div class="a" style="left:424px;top:553.5px;width:80px;height:2px;background:#fdfdfd"></div>
<div class="a" style="left:417px;top:644.5px;width:83px;height:2px;background:#fdfdfd"></div>
<div class="a" style="left:420px;top:689.5px;width:80px;height:2px;background:#fdfdfd"></div>
<div class="a" style="left:417px;top:734.5px;width:89px;height:2px;background:#fdfdfd"></div>
<div class="a" style="left:408px;top:289px;width:12px;height:12px;background:#fafafa"></div>
<div class="a" style="left:420px;top:289px;width:12px;height:12px;background:#f8f8f8"></div>
<div class="a" style="left:432px;top:289px;width:12px;height:12px;background:#f7f7f7"></div>
<div class="a" style="left:444px;top:289px;width:12px;height:12px;background:#f5f5f5"></div>
<div class="a" style="left:456px;top:289px;width:12px;height:12px;background:#f7f7f7"></div>
<div class="a" style="left:468px;top:289px;width:12px;height:12px;background:#f8f8f8"></div>
<div class="a" style="left:408px;top:301px;width:12px;height:12px;background:#faf6f3"></div>
<div class="a" style="left:420px;top:301px;width:12px;height:12px;background:#c8c9cd"></div>
<div class="a" style="left:432px;top:301px;width:12px;height:12px;background:#c9cacc"></div>
<div class="a" style="left:444px;top:301px;width:12px;height:12px;background:#cbcccd"></div>
<div class="a" style="left:456px;top:301px;width:12px;height:12px;background:#c9cbcc"></div>
<div class="a" style="left:468px;top:301px;width:12px;height:12px;background:#c8c9c8"></div>
<div class="a" style="left:480px;top:301px;width:12px;height:12px;background:#ebebed"></div>
<div class="a" style="left:432px;top:337px;width:12px;height:12px;background:#f3f3f1"></div>
<div class="a" style="left:444px;top:337px;width:12px;height:12px;background:#ededee"></div>
<div class="a" style="left:456px;top:337px;width:12px;height:12px;background:#ececec"></div>
<div class="a" style="left:432px;top:349px;width:12px;height:12px;background:#ebeae8"></div>
<div class="a" style="left:444px;top:349px;width:12px;height:12px;background:#e1e2e4"></div>
<div class="a" style="left:456px;top:349px;width:12px;height:12px;background:#e3e4e6"></div>
<div class="a" style="left:432px;top:385px;width:12px;height:12px;background:#d7d8da"></div>
<div class="a" style="left:444px;top:385px;width:12px;height:12px;background:#d2d3d5"></div>
<div class="a" style="left:456px;top:385px;width:12px;height:12px;background:#cdcecf"></div>
<div class="a" style="left:468px;top:385px;width:12px;height:12px;background:#f8f9fa"></div>
<div class="a" style="left:432px;top:397px;width:12px;height:12px;background:#e7e8ea"></div>
<div class="a" style="left:444px;top:397px;width:12px;height:12px;background:#e4e5e6"></div>
<div class="a" style="left:456px;top:397px;width:12px;height:12px;background:#e5e6e6"></div>
<div class="a" style="left:468px;top:397px;width:12px;height:12px;background:#f6f7f9"></div>
<div class="a" style="left:420px;top:433px;width:12px;height:12px;background:#d9d9d9"></div>
<div class="a" style="left:432px;top:433px;width:12px;height:12px;background:#d2d2d2"></div>
<div class="a" style="left:444px;top:433px;width:12px;height:12px;background:#d7d8d9"></div>
<div class="a" style="left:456px;top:433px;width:12px;height:12px;background:#cfd0d2"></div>
<div class="a" style="left:468px;top:433px;width:12px;height:12px;background:#d6d7d9"></div>
<div class="a" style="left:420px;top:445px;width:12px;height:12px;background:#eeeeee"></div>
<div class="a" style="left:432px;top:445px;width:12px;height:12px;background:#f1f1f1"></div>
<div class="a" style="left:444px;top:445px;width:12px;height:12px;background:#ededed"></div>
<div class="a" style="left:456px;top:445px;width:12px;height:12px;background:#eef0f0"></div>
<div class="a" style="left:468px;top:445px;width:12px;height:12px;background:#f0f1f1"></div>
<div class="a" style="left:408px;top:481px;width:12px;height:12px;background:#e8e7e5"></div>
<div class="a" style="left:420px;top:481px;width:12px;height:12px;background:#d3d4d6"></div>
<div class="a" style="left:432px;top:481px;width:12px;height:12px;background:#cdcdcd"></div>
<div class="a" style="left:444px;top:481px;width:12px;height:12px;background:#c9c9c9"></div>
<div class="a" style="left:456px;top:481px;width:12px;height:12px;background:#c3c4c6"></div>
<div class="a" style="left:468px;top:481px;width:12px;height:12px;background:#cfcfcf"></div>
<div class="a" style="left:480px;top:481px;width:12px;height:12px;background:#e1e2e4"></div>
<div class="a" style="left:420px;top:517px;width:12px;height:12px;background:#ececec"></div>
<div class="a" style="left:432px;top:517px;width:12px;height:12px;background:#e8eaea"></div>
<div class="a" style="left:444px;top:517px;width:12px;height:12px;background:#f0f0f0"></div>
<div class="a" style="left:456px;top:517px;width:12px;height:12px;background:#f0f0f0"></div>
<div class="a" style="left:468px;top:517px;width:12px;height:12px;background:#f0f0f0"></div>
<div class="a" style="left:420px;top:529px;width:12px;height:12px;background:#e3e2e0"></div>
<div class="a" style="left:432px;top:529px;width:12px;height:12px;background:#d2d3d5"></div>
<div class="a" style="left:444px;top:529px;width:12px;height:12px;background:#dcdddd"></div>
<div class="a" style="left:456px;top:529px;width:12px;height:12px;background:#e0e0e0"></div>
<div class="a" style="left:468px;top:529px;width:12px;height:12px;background:#dcdddf"></div>
<div class="a" style="left:432px;top:565px;width:12px;height:12px;background:#e5e5e5"></div>
<div class="a" style="left:444px;top:565px;width:12px;height:12px;background:#d4d5d7"></div>
<div class="a" style="left:456px;top:565px;width:12px;height:12px;background:#e3e4e6"></div>
<div class="a" style="left:432px;top:577px;width:12px;height:12px;background:#ebeae8"></div>
<div class="a" style="left:444px;top:577px;width:12px;height:12px;background:#dcdddf"></div>
<div class="a" style="left:456px;top:577px;width:12px;height:12px;background:#f0f0f0"></div>
<div class="a" style="left:420px;top:613px;width:12px;height:12px;background:#faf9f7"></div>
<div class="a" style="left:432px;top:613px;width:12px;height:12px;background:#c8c9cb"></div>
<div class="a" style="left:444px;top:613px;width:12px;height:12px;background:#cacaca"></div>
<div class="a" style="left:456px;top:613px;width:12px;height:12px;background:#cacaca"></div>
<div class="a" style="left:468px;top:613px;width:12px;height:12px;background:#eeeff1"></div>
<div class="a" style="left:420px;top:625px;width:12px;height:12px;background:#f9f9f7"></div>
<div class="a" style="left:432px;top:625px;width:12px;height:12px;background:#efefef"></div>
<div class="a" style="left:444px;top:625px;width:12px;height:12px;background:#f1f1f1"></div>
<div class="a" style="left:456px;top:625px;width:12px;height:12px;background:#f1f1f1"></div>
<div class="a" style="left:420px;top:661px;width:12px;height:12px;background:#cfcdce"></div>
<div class="a" style="left:432px;top:661px;width:12px;height:12px;background:#c5c6c8"></div>
<div class="a" style="left:444px;top:661px;width:12px;height:12px;background:#cacbcd"></div>
<div class="a" style="left:456px;top:661px;width:12px;height:12px;background:#cfcfcf"></div>
<div class="a" style="left:468px;top:661px;width:12px;height:12px;background:#c5c9cc"></div>
<div class="a" style="left:432px;top:697px;width:12px;height:12px;background:#f0f0f0"></div>
<div class="a" style="left:444px;top:697px;width:12px;height:12px;background:#e8e8e8"></div>
<div class="a" style="left:456px;top:697px;width:12px;height:12px;background:#ededed"></div>
<div class="a" style="left:432px;top:709px;width:12px;height:12px;background:#e3e3e1"></div>
<div class="a" style="left:444px;top:709px;width:12px;height:12px;background:#cbcbcb"></div>
<div class="a" style="left:456px;top:709px;width:12px;height:12px;background:#dadbdd"></div>
<div class="a" style="left:1530px;top:727px;width:230px;height:8px;background:#fafafa;border-top:1px solid #ebeef5"></div>
<div class="a" style="left:774px;top:750px;font-size:13px;line-height:17px;color:#606266;white-space:nowrap">共 22 条</div>
<div class="a" style="left:833px;top:747px;width:94px;height:26px;border:1px solid #dcdfe6;border-radius:3px"></div>
<div class="a" style="left:852px;top:750px;font-size:13px;line-height:17px;color:#606266">10条/页</div>
<svg class="a" style="left:911px;top:757px" width="9" height="6" viewBox="0 0 9 6"><path d="M.5 .5l4 4 4-4" fill="none" stroke="#c0c4cc" stroke-width="1"/></svg>
<div class="pg" style="left:965px"><svg style="margin-top:8px" width="6" height="10" viewBox="0 0 6 10"><path d="M5 .5L1 5l4 4.5" fill="none" stroke="#c0c4cc" stroke-width="1.2"/></svg></div>
<div class="pg" style="left:1003px;background:#1890ff;color:#fff">1</div>
<div class="pg" style="left:1040px">2</div>
<div class="pg" style="left:1078px">3</div>
<div class="pg" style="left:1115px"><svg style="margin-top:8px" width="6" height="10" viewBox="0 0 6 10"><path d="M1 .5L5 5 1 9.5" fill="none" stroke="#303133" stroke-width="1.2"/></svg></div>
<div class="a" style="left:1171px;top:750px;font-size:13px;line-height:17px;color:#606266">前往</div>
<div class="a" style="left:1199px;top:747px;width:43px;height:26px;border:1px solid #dcdfe6;border-radius:3px;text-align:center;font-size:13px;line-height:24px;color:#606266">1</div>
<div class="a" style="left:1246px;top:750px;font-size:13px;line-height:17px;color:#606266">页</div>
<div class="a dd"></div>
<svg class="a" style="left:1687px;top:326px" width="14" height="7" viewBox="0 0 14 7"><path d="M0 7L7 0l7 7" fill="#fff" stroke="#ebeef5" stroke-width="1"/></svg>
<div class="di" style="top:339.00px;">资金变更</div>
<div class="di" style="top:364.30px;">资金记录</div>
<div class="di" style="top:389.60px;background:#e8f4ff;color:#66b1ff;">计费</div>
<div class="di" style="top:414.90px;">店铺</div>
<div class="di" style="top:440.20px;">店员</div>
<div class="di" style="top:465.50px;">接单员</div>
<div class="di" style="top:490.80px;">对接</div>
<div class="di" style="top:516.10px;">详情</div>
<div class="di" style="top:541.40px;">删除</div>
<div class="a" style="left:1655.5px;top:387px;width:61.5px;height:28.5px;border:2.5px solid #f31b1b;border-radius:3px"></div>
</body></html>
